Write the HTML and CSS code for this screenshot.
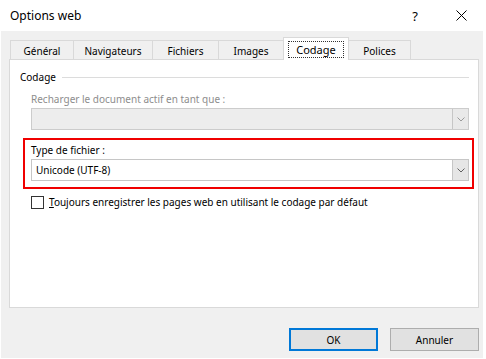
FILE: index.html
```html
<!DOCTYPE html>
<html lang="fr">
<head>
  <meta charset="UTF-8" />
  <title>Options web</title>
  <link rel="stylesheet" href="styles.css">
</head>
<body>
  <div class="titlebar">
    <span class="title">Options web</span>
    <span class="help">?</span>
    <svg class="close" width="11" height="11" viewBox="0 0 11 11">
      <path d="M0.5 0.5 L10.5 10.5 M10.5 0.5 L0.5 10.5" stroke="#000" stroke-width="1" fill="none"/>
    </svg>
  </div>

  <div class="dialog">
    <div class="tabs">
      <div class="tab t1">Général</div>
      <div class="tab t2">Navigateurs</div>
      <div class="tab t3">Fichiers</div>
      <div class="tab t4">Images</div>
      <div class="tab t5 active"><span class="focus">Codage</span></div>
      <div class="tab t6">Polices</div>
    </div>

    <div class="panel">
      <div class="group-title">Codage</div>
      <div class="group">
        <div class="label disabled">Recharger le document actif en tant que :</div>
        <div class="combo disabled">
          <span class="arrow"><svg width="8" height="5" viewBox="0 0 8 5"><path d="M0.5 0.5 L4 4 L7.5 0.5" stroke="#9a9a9a" fill="none"/></svg></span>
        </div>

        <div class="highlight">
          <div class="label">Type de f<u>i</u>chier :</div>
          <div class="combo">
            <span class="value">Unicode (UTF-8)</span>
            <span class="arrow"><svg width="8" height="5" viewBox="0 0 8 5"><path d="M0.5 0.5 L4 4 L7.5 0.5" stroke="#606060" fill="none"/></svg></span>
          </div>
        </div>

        <label class="check">
          <span class="box"></span>
          <span><u>T</u>oujours enregistrer les pages web en utilisant le codage par défaut</span>
        </label>
      </div>
    </div>

    <div class="buttons">
      <button class="btn default">OK</button>
      <button class="btn">Annuler</button>
    </div>
  </div>
</body>
</html>
```

FILE: styles.css
```css
body {
  margin: 0;
  background: #ffffff;
  font-family: "Noto Sans", "Open Sans", sans-serif;
  font-size: 10px;
  color: #000;
  width: 486px;
  height: 359px;
  overflow: hidden;
}
.titlebar {
  height: 31px;
  display: flex;
  align-items: center;
  font-size: 12px;
}
.title {
  margin-left: 10px;
  margin-top: -1px;
}
.help {
  margin-left: auto;
  margin-right: 38px;
  font-size: 13px;
}
.close {
  margin-right: 19px;
}
.dialog {
  background: #f0f0f0;
  margin: 0 3px 1px 1px;
  height: 327px;
  padding: 6px 4px 0 8px;
  box-sizing: border-box;
}
.tabs {
  display: flex;
  align-items: flex-end;
  height: 22px;
  padding-left: 1px;
}
.tab {
  height: 19px;
  box-sizing: border-box;
  border: 1px solid #d9d9d9;
  border-bottom: none;
  border-right: none;
  background: #f0f0f0;
  display: flex;
  align-items: center;
  justify-content: center;
  padding-top: 1px;
}
.tab:last-child {
  border-right: 1px solid #d9d9d9;
}
.t1 { width: 63px; }
.t2 { width: 79px; }
.t3 { width: 66px; }
.t4 { width: 65px; }
.t5 { width: 66px; }
.t6 { width: 62px; }
.tab.active {
  height: 23px;
  background: #fff;
  border-right: 1px solid #d9d9d9;
  margin-bottom: -1px;
  position: relative;
  z-index: 1;
  padding-top: 0;
  font-size: 11px;
}
.tab.active + .tab {
  border-left: none;
}
.focus {
  border: 1px dotted #333;
  width: 56px;
  height: 17px;
  box-sizing: border-box;
  display: flex;
  align-items: center;
  justify-content: center;
}
.panel {
  background: #fff;
  border: 1px solid #d9d9d9;
  height: 249px;
  box-sizing: border-box;
  padding: 9px 9px 0 10px;
}
.group-title {
  display: flex;
  align-items: center;
  line-height: 16px;
}
.group-title::after {
  content: "";
  flex: 1;
  height: 1px;
  background: #dcdcdc;
  margin-left: 6px;
}
.group {
  padding-left: 11px;
}
.label {
  line-height: 16px;
  margin-top: 6px;
  margin-bottom: 1px;
}
.label.disabled {
  color: #8d8d8d;
}
.combo {
  height: 22px;
  box-sizing: border-box;
  border: 1px solid #c6c6c6;
  background: #fff;
  display: flex;
  align-items: center;
}
.combo.disabled {
  background: #ededed;
  border-color: #cccccc;
}
.combo .value {
  padding-left: 4px;
}
.arrow {
  margin-left: auto;
  width: 16px;
  height: 20px;
  box-sizing: border-box;
  border-left: 1px solid #c6c6c6;
  background: #e6e6e6;
  display: flex;
  align-items: center;
  justify-content: center;
}
.combo.disabled .arrow {
  background: #e9e9e9;
}
.highlight {
  border: 2px solid #f00000;
  margin: 8px -5px 0 -8px;
  padding: 2px 3px 6px 6px;
}
.highlight .label {
  margin-top: 0;
}
.check {
  display: flex;
  align-items: center;
  margin-top: 6px;
  line-height: 14px;
}
.box {
  width: 13px;
  height: 13px;
  box-sizing: border-box;
  border: 1px solid #333;
  background: #fff;
  margin-right: 5px;
}
.buttons {
  display: flex;
  justify-content: flex-end;
  gap: 12px;
  margin-top: 20px;
}
.btn {
  width: 89px;
  height: 23px;
  font-family: inherit;
  font-size: 10px;
  background: #e1e1e1;
  border: 1px solid #adadad;
  padding: 0;
  color: #000;
}
.btn.default {
  border: 2px solid #0078d7;
}
```
